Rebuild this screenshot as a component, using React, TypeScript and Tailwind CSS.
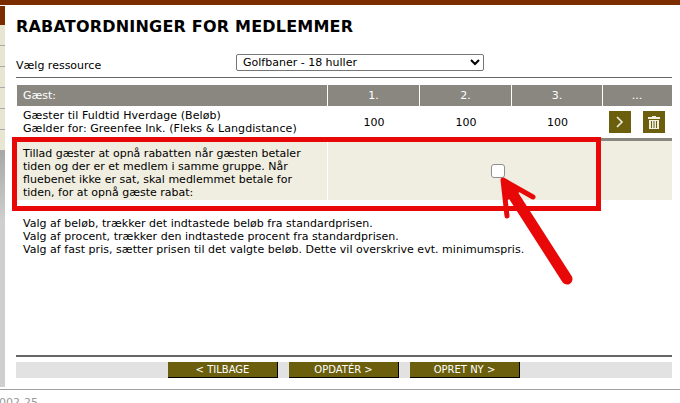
const cols = ["1.", "2.", "3."];

const App = () => {
  return (
    <div className="relative h-[403px] w-[680px] overflow-hidden bg-white font-['DejaVu_Sans',sans-serif] text-[11px] leading-[13px] text-black">
      <div className="h-[5px] bg-[#7b2d00]" />
      <div className="flex h-[384px]">
        <div className="mb-[2px] flex w-[5px] shrink-0 flex-col">
          <div className="mt-px h-[19px] shrink-0 bg-[#7b2d00]" />
          {[0, 1, 2, 3, 4, 5].map((i) => (
            <div key={i} className="h-[21px] shrink-0 border-b border-[#aaa] bg-[#e8e6d2]" />
          ))}
          <div className="flex-1 bg-gradient-to-b from-[#a8a8a8] to-[#cfcfcf] to-30%" />
        </div>
        <div className="w-[11px] shrink-0" />
        <div className="w-[656px] shrink-0">
          <h1 className="mt-[12px] text-[16px] font-bold leading-[20px] tracking-[0.2px]">RABATORDNINGER FOR MEDLEMMER</h1>
          <div className="mt-[17px] flex h-[17px] items-start">
            <span className="w-[220px] pt-[5px]">Vælg ressource</span>
            <select className="h-[17px] w-[248px] rounded-[2px] border border-[#767676] bg-white pl-[2px] text-[11px] leading-[13px]">
              <option>Golfbaner - 18 huller</option>
            </select>
          </div>
          <div className="mt-[6px] h-px bg-[#666]" />
          <div className="mt-[7px] ml-px flex h-[21px] bg-[#8a8780] text-white">
            <div className="flex w-[311px] items-center border-r border-white pl-[6px]">Gæst:</div>
            {cols.map((c, i) => (
              <div key={c} className={`flex items-center justify-center border-r border-white ${i === 2 ? "w-[91px]" : "w-[92px]"}`}>
                {c}
              </div>
            ))}
            <div className="flex w-[68px] items-center justify-center">...</div>
          </div>
          <div className="ml-px flex h-[32px] items-center">
            <div className="w-[311px] pl-[6px] tracking-[0.08px]">
              <div>Gæster til Fuldtid Hverdage (Beløb)</div>
              <div>Gælder for: Greenfee Ink. (Fleks &amp; Langdistance)</div>
            </div>
            {cols.map((c, i) => (
              <div key={c} className={`text-center ${i === 2 ? "w-[91px]" : "w-[92px]"}`}>100</div>
            ))}
            <div className="flex w-[68px] items-center gap-[12px] pl-[6px]">
              <button className="flex h-[22px] w-[22px] items-center justify-center bg-[#6b5f0e]">
                <svg width="8" height="12" viewBox="0 0 8 12" fill="none" stroke="#f0eee0" strokeWidth="1.6"><path d="M1 1l5 5-5 5" /></svg>
              </button>
              <button className="flex h-[22px] w-[22px] items-center justify-center bg-[#6b5f0e]">
                <svg width="12" height="13" viewBox="0 0 12 13" fill="#f0eee0"><path d="M4 0h4v1h4v2H0V1h4zM1 4h10v9H1zM3 5v7h1V5zm2.500 0v7h1V5zM8 5v7h1V5z" fillRule="evenodd" /></svg>
              </button>
            </div>
          </div>
          <div className="ml-px h-[3px] bg-[#8a8780]" />
          <div className="ml-px flex h-[59px] bg-[#f0eee0]">
            <div className="w-[311px] border-r border-white pl-[6px] pt-[6px] pr-[15px]">
              Tillad gæster at opnå rabatten når gæsten betaler tiden og der er et medlem i samme gruppe. Når fluebenet ikke er sat, skal medlemmet betale for tiden, for at opnå gæste rabat:
            </div>
            <div className="flex w-[275px] items-center pl-[163px]">
              <input type="checkbox" className="h-[14px] w-[14px] appearance-none rounded-[3px] border-[1.5px] border-[#8f8f8f] bg-white" />
            </div>
          </div>
          <div className="mt-[17px] ml-[7px] tracking-[0.03px]">
            <div>Valg af beløb, trækker det indtastede beløb fra standardprisen.</div>
            <div>Valg af procent, trækker den indtastede procent fra standardprisen.</div>
            <div>Valg af fast pris, sætter prisen til det valgte beløb. Dette vil overskrive evt. minimumspris.</div>
          </div>
          <div className="mt-[99px] h-[2px] bg-[#666]" />
          <div className="mt-[5px] flex h-[16px] justify-center gap-[11px] bg-[#e2e2e2]">
            {["< TILBAGE", "OPDATÉR >", "OPRET NY >"].map((t) => (
              <button key={t} className="h-[16px] w-[110px] border-r border-b border-black bg-[#6b5f0e] text-[10px] leading-[14px] text-white">
                {t}
              </button>
            ))}
          </div>
        </div>
      </div>
      <div className="h-px bg-[#a0a0a0]" />
      <div className="-ml-[8px] mt-[6px] text-[#999]">2002-25</div>

      {/* annotation laid over the page */}
      <div className="pointer-events-none absolute left-[12px] top-[137px] h-[74px] w-[589px] border-[5px] border-[#e80808]" />
      <svg className="pointer-events-none absolute left-[490px] top-[170px]" width="90" height="125" viewBox="0 0 90 125" fill="none" stroke="#e80808" strokeLinecap="round" strokeLinejoin="round">
        <path d="M77 109L18 17" strokeWidth="11" />
        <path d="M17 46L13 10L43 27" strokeWidth="5" />
        <path d="M13 10l2 20 15-10z" fill="#e80808" strokeWidth="3" />
      </svg>
    </div>
  );
};

export default App;
